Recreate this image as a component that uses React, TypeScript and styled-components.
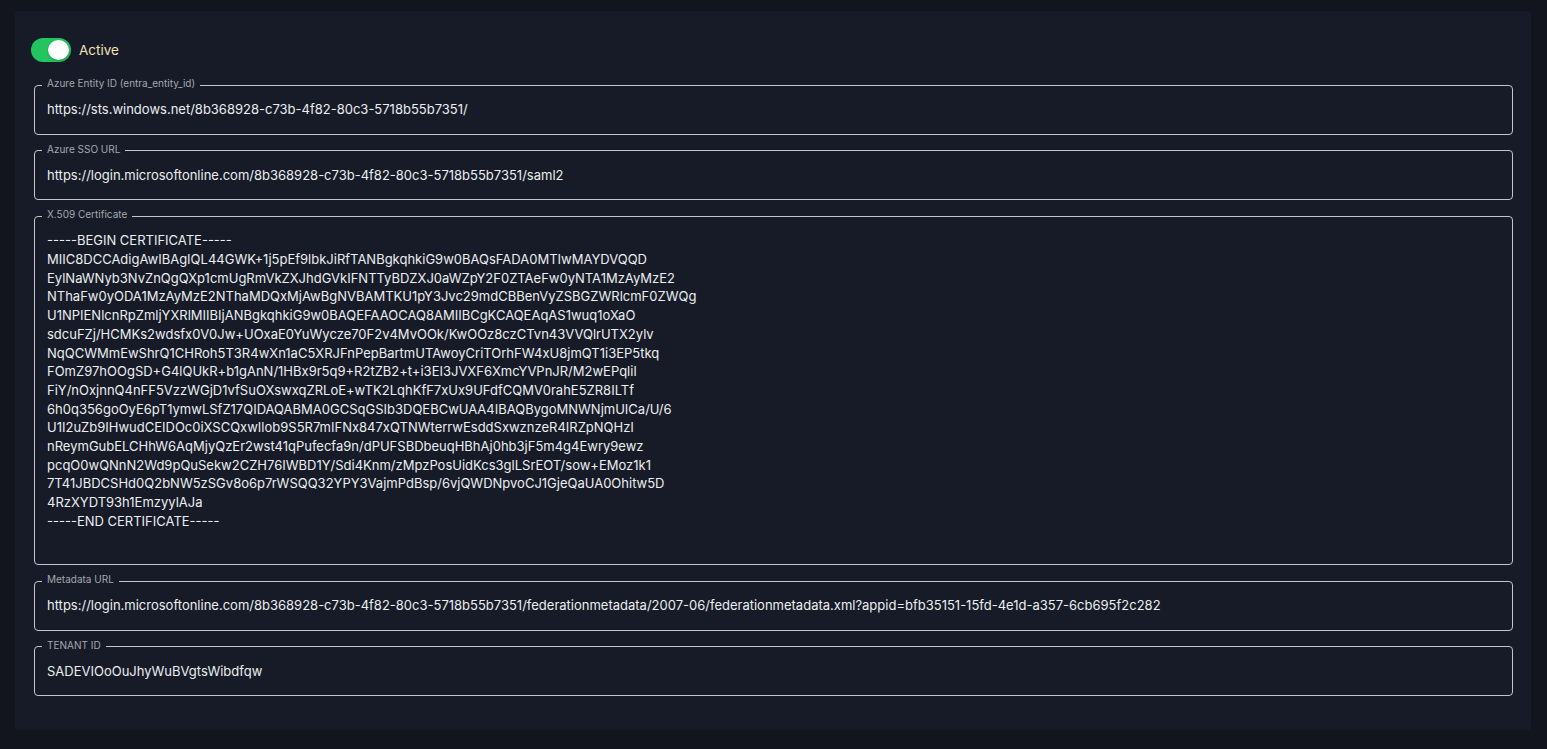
import React from "react";
import styled, { createGlobalStyle } from "styled-components";

const GlobalStyle = createGlobalStyle`
  html, body {
    margin: 0;
    padding: 0;
    background: #12151d;
    font-family: Inter, "Noto Sans", "Liberation Sans", sans-serif;
  }
  * { box-sizing: border-box; }
`;

const Page = styled.div`
  padding: 11px 16px 20px 15px;
  min-height: 749px;
`;

const Panel = styled.section`
  background: #161b27;
  border-radius: 4px;
  padding: 27px 18px 34px 19px;
  display: flex;
  flex-direction: column;
`;

const ToggleRow = styled.label`
  display: flex;
  align-items: center;
  gap: 8px;
  margin: 0 0 15px -3px;
  height: 24px;
  cursor: pointer;
`;

const Track = styled.span<{ $on: boolean }>`
  position: relative;
  width: 40px;
  height: 24px;
  border-radius: 12px;
  background: ${(p) => (p.$on ? "#22c55e" : "#4b5563")};
  flex: none;
`;

const Knob = styled.span<{ $on: boolean }>`
  position: absolute;
  top: 2px;
  left: ${(p) => (p.$on ? "17px" : "2px")};
  width: 21px;
  height: 20px;
  border-radius: 50%;
  background: #ffffff;
  box-shadow: 0 1px 2px rgba(0, 0, 0, 0.25);
`;

const ToggleText = styled.span`
  font-size: 13.5px;
  color: #f2e2b6;
`;

const Fields = styled.div`
  display: flex;
  flex-direction: column;
  gap: 8px;
`;

const Field = styled.fieldset`
  margin: 0;
  padding: 0 12px 0 7px;
  border: 1px solid #c3c6cc;
  border-radius: 4px;
  min-width: 0;
`;

const Legend = styled.legend`
  font-size: 10px;
  line-height: 12px;
  padding: 0 5px 4px 5px;
  color: #a4a8b0;
`;

const Value = styled.div<{ $rows?: number }>`
  padding: 7px 0 15px 5px;
  font-size: 13px;
  line-height: 1.4375em;
  color: #eceef1;
  white-space: pre;
  min-height: ${(p) => (p.$rows ? `calc(${p.$rows} * 1.4375em + 22px)` : "auto")};
`;

const CERT = `-----BEGIN CERTIFICATE-----
MIIC8DCCAdigAwIBAgIQL44GWK+1j5pEf9lbkJiRfTANBgkqhkiG9w0BAQsFADA0MTIwMAYDVQQD
EylNaWNyb3NvZnQgQXp1cmUgRmVkZXJhdGVkIFNTTyBDZXJ0aWZpY2F0ZTAeFw0yNTA1MzAyMzE2
NThaFw0yODA1MzAyMzE2NThaMDQxMjAwBgNVBAMTKU1pY3Jvc29mdCBBenVyZSBGZWRlcmF0ZWQg
U1NPIENlcnRpZmljYXRlMIIBIjANBgkqhkiG9w0BAQEFAAOCAQ8AMIIBCgKCAQEAqAS1wuq1oXaO
sdcuFZj/HCMKs2wdsfx0V0Jw+UOxaE0YuWycze70F2v4MvOOk/KwOOz8czCTvn43VVQlrUTX2ylv
NqQCWMmEwShrQ1CHRoh5T3R4wXn1aC5XRJFnPepBartmUTAwoyCriTOrhFW4xU8jmQT1i3EP5tkq
FOmZ97hOOgSD+G4lQUkR+b1gAnN/1HBx9r5q9+R2tZB2+t+i3EI3JVXF6XmcYVPnJR/M2wEPqlil
FiY/nOxjnnQ4nFF5VzzWGjD1vfSuOXswxqZRLoE+wTK2LqhKfF7xUx9UFdfCQMV0rahE5ZR8ILTf
6h0q356goOyE6pT1ymwLSfZ17QIDAQABMA0GCSqGSIb3DQEBCwUAA4IBAQBygoMNWNjmUICa/U/6
U1I2uZb9IHwudCEIDOc0iXSCQxwIlob9S5R7mIFNx847xQTNWterrwEsddSxwznzeR4IRZpNQHzl
nReymGubELCHhW6AqMjyQzEr2wst41qPufecfa9n/dPUFSBDbeuqHBhAj0hb3jF5m4g4Ewry9ewz
pcqO0wQNnN2Wd9pQuSekw2CZH76IWBD1Y/Sdi4Knm/zMpzPosUidKcs3glLSrEOT/sow+EMoz1k1
7T41JBDCSHd0Q2bNW5zSGv8o6p7rWSQQ32YPY3VajmPdBsp/6vjQWDNpvoCJ1GjeQaUA0Ohitw5D
4RzXYDT93h1EmzyylAJa
-----END CERTIFICATE-----`;

const fields: { label: string; value: string; rows?: number }[] = [
  {
    label: "Azure Entity ID (entra_entity_id)",
    value: "https://sts.windows.net/8b368928-c73b-4f82-80c3-5718b55b7351/",
  },
  {
    label: "Azure SSO URL",
    value: "https://login.microsoftonline.com/8b368928-c73b-4f82-80c3-5718b55b7351/saml2",
  },
  { label: "X.509 Certificate", value: CERT, rows: 17 },
  {
    label: "Metadata URL",
    value:
      "https://login.microsoftonline.com/8b368928-c73b-4f82-80c3-5718b55b7351/federationmetadata/2007-06/federationmetadata.xml?appid=bfb35151-15fd-4e1d-a357-6cb695f2c282",
  },
  { label: "TENANT ID", value: "SADEVIOoOuJhyWuBVgtsWibdfqw" },
];

export default function App() {
  const on = true;
  return (
    <>
      <GlobalStyle />
      <Page>
        <Panel>
          <ToggleRow>
            <Track $on={on}>
              <Knob $on={on} />
            </Track>
            <ToggleText>Active</ToggleText>
          </ToggleRow>
          <Fields>
            {fields.map((f) => (
              <Field key={f.label}>
                <Legend>{f.label}</Legend>
                <Value $rows={f.rows}>{f.value}</Value>
              </Field>
            ))}
          </Fields>
        </Panel>
      </Page>
    </>
  );
}
